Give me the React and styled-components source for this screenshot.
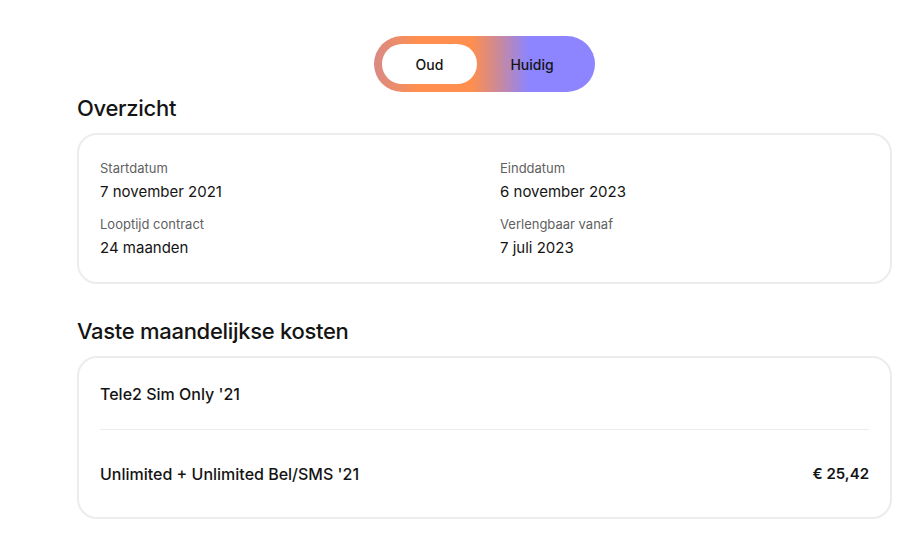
import React, { useState } from "react";
import styled, { createGlobalStyle } from "styled-components";

const GlobalStyle = createGlobalStyle`
  html, body {
    margin: 0;
    padding: 0;
    background: #ffffff;
    font-family: Inter, "Noto Sans", Arial, sans-serif;
    color: #141414;
  }
`;

const Page = styled.div`
  width: 916px;
  padding: 36px 24px 18px 77px;
  box-sizing: border-box;
  display: flex;
  flex-direction: column;
`;

const ToggleRow = styled.div`
  display: flex;
  justify-content: center;
`;

const Toggle = styled.div`
  width: 221px;
  height: 56px;
  border-radius: 28px;
  box-sizing: border-box;
  padding: 8px;
  display: flex;
  align-items: center;
  background: linear-gradient(
    90deg,
    #d98a86 0%,
    #ff8f4e 20%,
    #ff8f4e 44%,
    #d08a90 55%,
    #8c85ff 70%,
    #8c85ff 100%
  );
`;

const ToggleOption = styled.button`
  height: 40px;
  border: none;
  border-radius: 20px;
  font-family: inherit;
  font-size: 14px;
  font-weight: 500;
  color: #141414;
  cursor: pointer;
  background: ${(p) => (p.$active ? "#ffffff" : "transparent")};
  flex: ${(p) => (p.$active ? "0 0 95px" : "1")};
  padding: 0;
`;

const Heading = styled.h2`
  margin: ${(p) => p.$top}px 0 11px 0;
  font-size: 22px;
  font-weight: 500;
  letter-spacing: -0.3px;
  line-height: 28px;
`;

const Card = styled.div`
  width: 815px;
  box-sizing: border-box;
  border: 2px solid #ececec;
  border-radius: 20px;
  padding: ${(p) => p.$pad};
`;

const InfoGrid = styled.div`
  display: grid;
  grid-template-columns: 400px 1fr;
  row-gap: 13px;
`;

const InfoItem = styled.div`
  display: flex;
  flex-direction: column;
  gap: 5px;
`;

const Label = styled.span`
  font-size: 13px;
  color: #5f5f5f;
  line-height: 18px;
`;

const Value = styled.span`
  font-size: 15px;
  color: #141414;
  line-height: 20px;
`;

const CostRow = styled.div`
  display: flex;
  justify-content: space-between;
  align-items: center;
  height: ${(p) => p.$h}px;
  font-size: 16px;
  font-weight: 500;
`;

const Divider = styled.div`
  height: 1px;
  background: #ececec;
`;

const Price = styled.span`
  font-weight: 600;
  font-size: 15px;
`;

const info = [
  ["Startdatum", "7 november 2021"],
  ["Einddatum", "6 november 2023"],
  ["Looptijd contract", "24 maanden"],
  ["Verlengbaar vanaf", "7 juli 2023"],
];

export default function App() {
  const [mode, setMode] = useState("oud");
  return (
    <Page>
      <GlobalStyle />
      <ToggleRow>
        <Toggle>
          <ToggleOption $active={mode === "oud"} onClick={() => setMode("oud")}>
            Oud
          </ToggleOption>
          <ToggleOption $active={mode === "huidig"} onClick={() => setMode("huidig")}>
            Huidig
          </ToggleOption>
        </Toggle>
      </ToggleRow>

      <Heading $top={2}>Overzicht</Heading>
      <Card $pad="24px 22px 24px 21px">
        <InfoGrid>
          {info.map(([label, value]) => (
            <InfoItem key={label}>
              <Label>{label}</Label>
              <Value>{value}</Value>
            </InfoItem>
          ))}
        </InfoGrid>
      </Card>

      <Heading $top={33}>Vaste maandelijkse kosten</Heading>
      <Card $pad="0 21px">
        <CostRow $h={71}>
          <span>Tele2 Sim Only '21</span>
        </CostRow>
        <Divider />
        <CostRow $h={87}>
          <span>Unlimited + Unlimited Bel/SMS '21</span>
          <Price>€ 25,42</Price>
        </CostRow>
      </Card>
    </Page>
  );
}
